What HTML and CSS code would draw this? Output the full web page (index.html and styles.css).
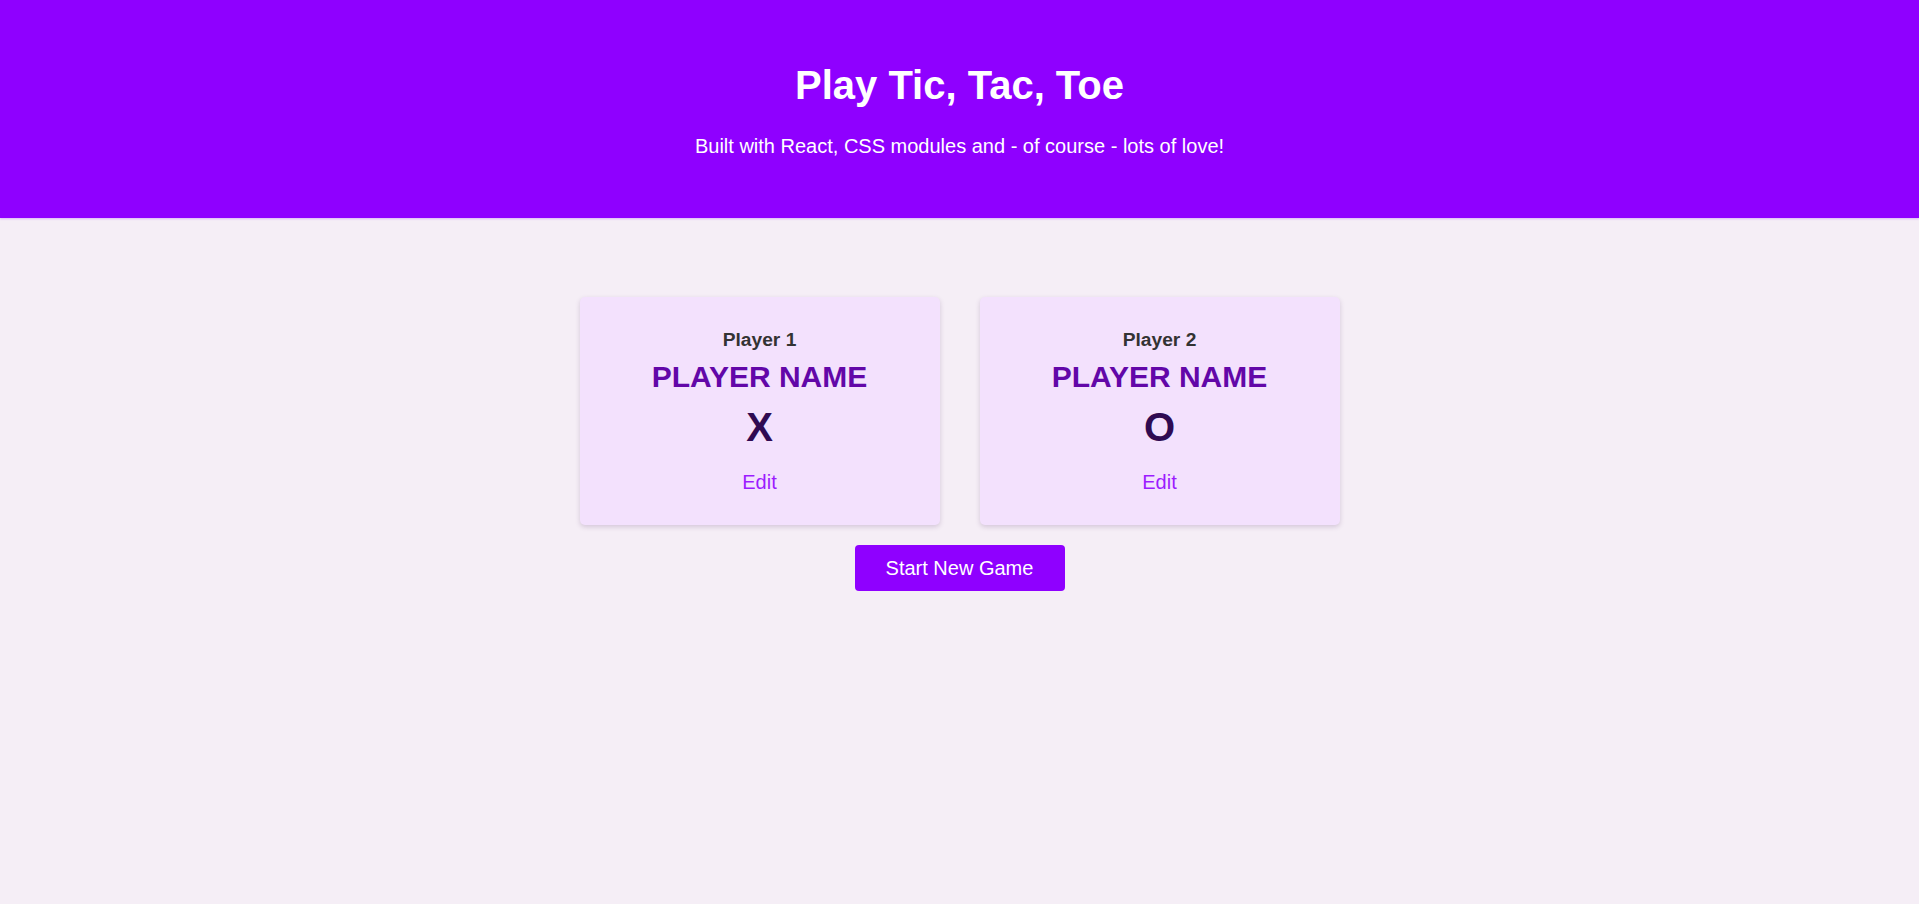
FILE: index.html
```html
<!DOCTYPE html>
<html lang="en">
<head>
<meta charset="utf-8">
<title>Tic Tac Toe</title>
<link rel="stylesheet" href="styles.css">
</head>
<body>
<header class="hero">
  <h1 class="hero-title">Play Tic, Tac, Toe</h1>
  <p class="hero-sub">Built with React, CSS modules and - of course - lots of love!</p>
</header>
<main class="game">
  <section class="players">
    <article class="player-card">
      <h2 class="player-label">Player 1</h2>
      <h3 class="player-name">PLAYER NAME</h3>
      <p class="player-symbol">X</p>
      <button class="edit-btn" type="button">Edit</button>
    </article>
    <article class="player-card">
      <h2 class="player-label">Player 2</h2>
      <h3 class="player-name">PLAYER NAME</h3>
      <p class="player-symbol">O</p>
      <button class="edit-btn" type="button">Edit</button>
    </article>
  </section>
  <button class="start-btn" type="button">Start New Game</button>
</main>
</body>
</html>
```

FILE: styles.css
```css
* { box-sizing: border-box; }

html, body {
  margin: 0;
  padding: 0;
}

body {
  font-family: "Liberation Sans", Arial, sans-serif;
  background: #f5eef6;
  min-height: 904px;
  color: #333;
}

.hero {
  background: #8f00ff;
  color: #ffffff;
  text-align: center;
  padding: 61px 0 60px;
  box-shadow: 0 1px 2px rgba(143, 0, 255, 0.25);
}

.hero-title {
  margin: 0;
  font-size: 40px;
  line-height: 48px;
  font-weight: 700;
}

.hero-sub {
  margin: 25px 0 0;
  font-size: 20px;
  line-height: 24px;
}

.game {
  display: flex;
  flex-direction: column;
  align-items: center;
  padding-top: 79px;
}

.players {
  display: flex;
  gap: 40px;
}

.player-card {
  width: 360px;
  height: 228px;
  padding: 31px 0;
  background: #f3e1fd;
  border-radius: 5px;
  box-shadow: 0 2px 5px rgba(80, 40, 100, 0.2);
  text-align: center;
  display: flex;
  flex-direction: column;
  align-items: center;
}

.player-label {
  margin: 0;
  font-size: 19.2px;
  line-height: 23px;
  font-weight: 700;
  color: #333333;
}

.player-name {
  margin: 8px 0 0;
  font-size: 30px;
  line-height: 36px;
  font-weight: 700;
  color: #6207a8;
}

.player-symbol {
  margin: 8px 0 0;
  font-size: 40px;
  line-height: 48px;
  font-weight: 700;
  color: #2f0a52;
}

.edit-btn {
  margin: 19px 0 0;
  padding: 0;
  border: none;
  background: none;
  font-family: inherit;
  font-size: 20px;
  line-height: 24px;
  color: #9c1cff;
  cursor: pointer;
}

.start-btn {
  margin-top: 20px;
  width: 210px;
  height: 46px;
  padding: 11px 0;
  border: none;
  border-radius: 4px;
  background: #8f00ff;
  color: #ffffff;
  font-family: inherit;
  font-size: 20px;
  line-height: 24px;
  cursor: pointer;
}
```
